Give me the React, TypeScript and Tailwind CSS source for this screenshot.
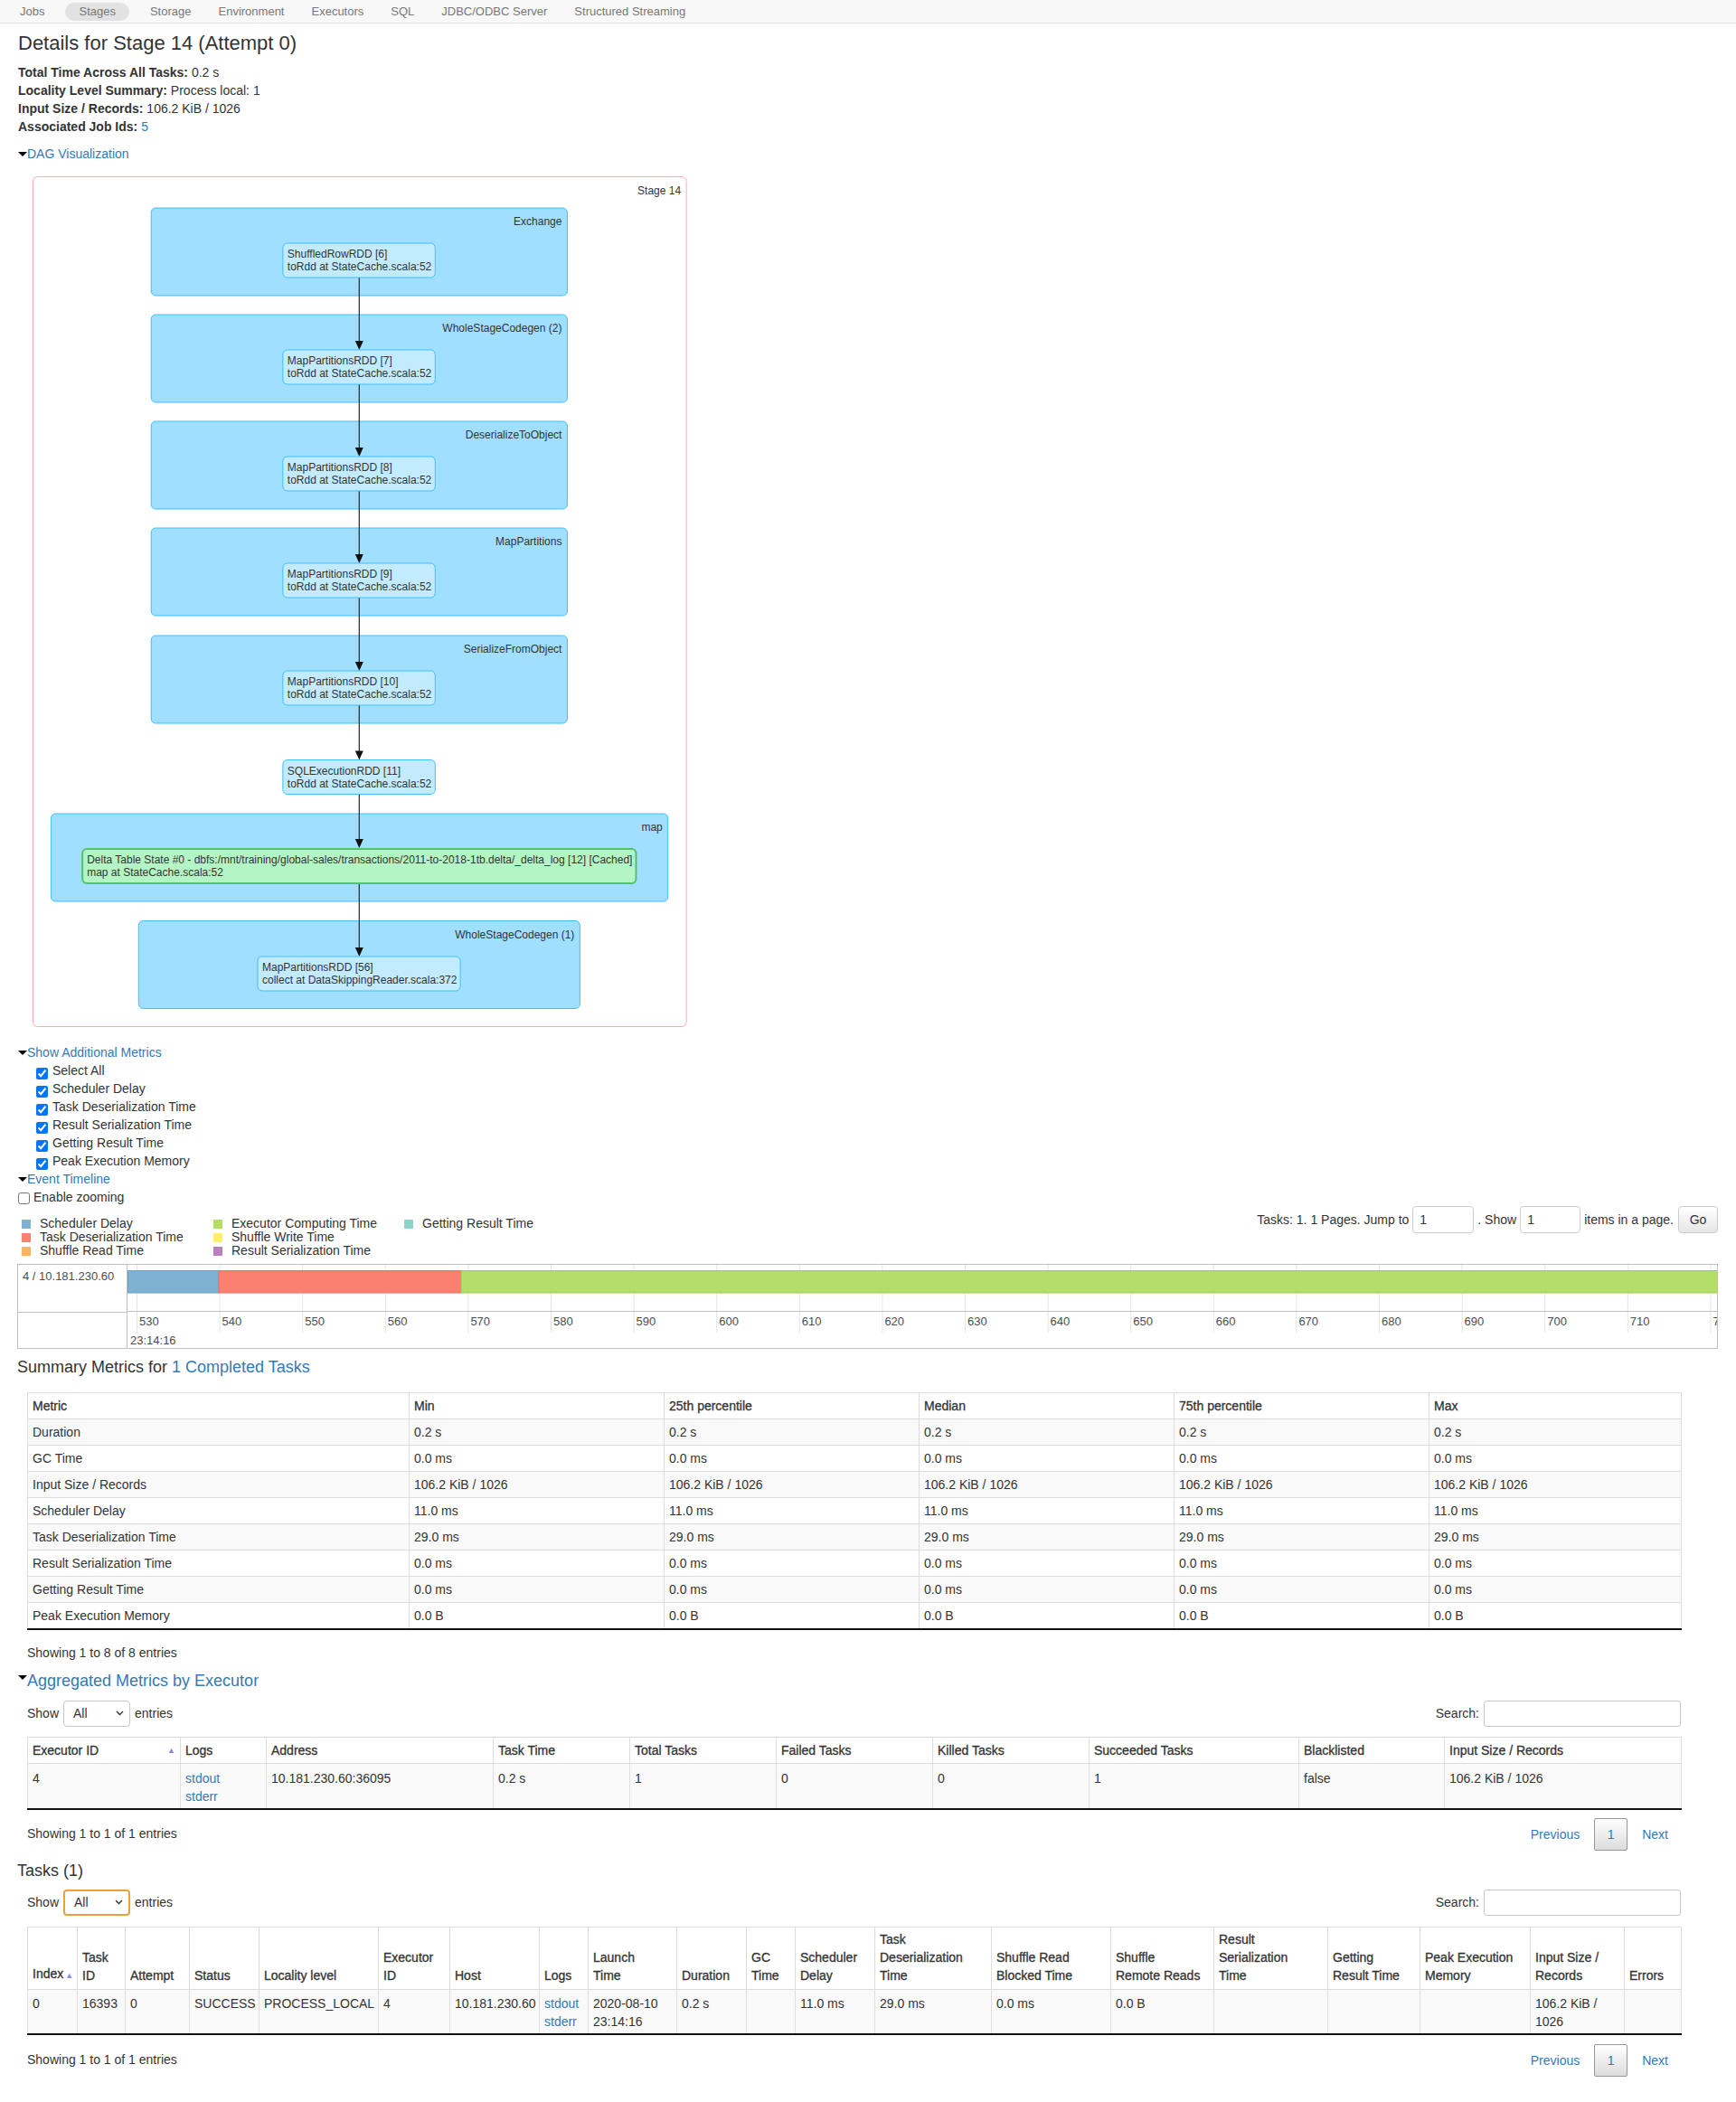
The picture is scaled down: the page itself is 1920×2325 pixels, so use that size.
import React from 'react';

const LINK = 'text-[#337ab7]';

const tabs = ['Jobs', 'Stages', 'Storage', 'Environment', 'Executors', 'SQL', 'JDBC/ODBC Server', 'Structured Streaming'];

const info = [
  ['Total Time Across All Tasks:', '0.2 s'],
  ['Locality Level Summary:', 'Process local: 1'],
  ['Input Size / Records:', '106.2 KiB / 1026'],
];

const metricBoxes = [
  'Select All',
  'Scheduler Delay',
  'Task Deserialization Time',
  'Result Serialization Time',
  'Getting Result Time',
  'Peak Execution Memory',
];

const legend: [string, string][] = [
  ['Scheduler Delay', 'bg-[#80b1d3]'],
  ['Executor Computing Time', 'bg-[#b3de69]'],
  ['Getting Result Time', 'bg-[#8dd3c7]'],
  ['Task Deserialization Time', 'bg-[#fb8072]'],
  ['Shuffle Write Time', 'bg-[#ffed6f]'],
  ['', ''],
  ['Shuffle Read Time', 'bg-[#fdb462]'],
  ['Result Serialization Time', 'bg-[#bc80bd]'],
];

const summary = [
  ['Duration', '0.2 s'],
  ['GC Time', '0.0 ms'],
  ['Input Size / Records', '106.2 KiB / 1026'],
  ['Scheduler Delay', '11.0 ms'],
  ['Task Deserialization Time', '29.0 ms'],
  ['Result Serialization Time', '0.0 ms'],
  ['Getting Result Time', '0.0 ms'],
  ['Peak Execution Memory', '0.0 B'],
];

const execCols = [
  { w: 169, h: 'Executor ID' },
  { w: 95, h: 'Logs' },
  { w: 251, h: 'Address' },
  { w: 151, h: 'Task Time' },
  { w: 162, h: 'Total Tasks' },
  { w: 173, h: 'Failed Tasks' },
  { w: 173, h: 'Killed Tasks' },
  { w: 232, h: 'Succeeded Tasks' },
  { w: 161, h: 'Blacklisted' },
  { w: 262, h: 'Input Size / Records' },
];
const execRow = ['4', 'LOGS', '10.181.230.60:36095', '0.2 s', '1', '0', '0', '1', 'false', '106.2 KiB / 1026'];

const taskCols: { w: number; h: string[] }[] = [
  { w: 55, h: ['Index'] },
  { w: 53, h: ['Task', 'ID'] },
  { w: 71, h: ['Attempt'] },
  { w: 77, h: ['Status'] },
  { w: 132, h: ['Locality level'] },
  { w: 79, h: ['Executor', 'ID'] },
  { w: 99, h: ['Host'] },
  { w: 54, h: ['Logs'] },
  { w: 98, h: ['Launch', 'Time'] },
  { w: 77, h: ['Duration'] },
  { w: 54, h: ['GC', 'Time'] },
  { w: 88, h: ['Scheduler', 'Delay'] },
  { w: 129, h: ['Task', 'Deserialization', 'Time'] },
  { w: 132, h: ['Shuffle Read', 'Blocked Time'] },
  { w: 114, h: ['Shuffle', 'Remote Reads'] },
  { w: 126, h: ['Result', 'Serialization', 'Time'] },
  { w: 102, h: ['Getting', 'Result Time'] },
  { w: 122, h: ['Peak Execution', 'Memory'] },
  { w: 104, h: ['Input Size /', 'Records'] },
  { w: 63, h: ['Errors'] },
];
const taskRow: string[][] = [
  ['0'], ['16393'], ['0'], ['SUCCESS'], ['PROCESS_LOCAL'], ['4'], ['10.181.230.60'], ['LOGS'],
  ['2020-08-10', '23:14:16'], ['0.2 s'], [], ['11.0 ms'], ['29.0 ms'], ['0.0 ms'], ['0.0 B'], [], [], [],
  ['106.2 KiB /', '1026'], [],
];

// DAG geometry, svg origin sits at page (35, 195)
const clusters = [
  { x: 133, y: 35, w: 463, label: 'Exchange' },
  { x: 133, y: 153, w: 463, label: 'WholeStageCodegen (2)' },
  { x: 133, y: 271, w: 463, label: 'DeserializeToObject' },
  { x: 133, y: 389, w: 463, label: 'MapPartitions' },
  { x: 133, y: 508, w: 463, label: 'SerializeFromObject' },
  { x: 21.5, y: 705, w: 686.5, label: 'map' },
  { x: 119, y: 823.5, w: 491, label: 'WholeStageCodegen (1)' },
];
const nodes = [
  { x: 279.5, y: 74, w: 169.5, a: 'ShuffledRowRDD [6]', b: 'toRdd at StateCache.scala:52' },
  { x: 279.5, y: 192, w: 169.5, a: 'MapPartitionsRDD [7]', b: 'toRdd at StateCache.scala:52' },
  { x: 279.5, y: 310, w: 169.5, a: 'MapPartitionsRDD [8]', b: 'toRdd at StateCache.scala:52' },
  { x: 279.5, y: 428, w: 169.5, a: 'MapPartitionsRDD [9]', b: 'toRdd at StateCache.scala:52' },
  { x: 279.5, y: 547, w: 169.5, a: 'MapPartitionsRDD [10]', b: 'toRdd at StateCache.scala:52' },
  { x: 279.5, y: 645.5, w: 169.5, a: 'SQLExecutionRDD [11]', b: 'toRdd at StateCache.scala:52' },
  {
    x: 56.5,
    y: 744,
    w: 616,
    a: 'Delta Table State #0 - dbfs:/mnt/training/global-sales/transactions/2011-to-2018-1tb.delta/_delta_log [12] [Cached]',
    b: 'map at StateCache.scala:52',
    cached: true,
  },
  { x: 251.5, y: 863, w: 225.5, a: 'MapPartitionsRDD [56]', b: 'collect at DataSkippingReader.scala:372' },
];

// horizontal squeeze so the drawing lands on the reference columns
const K = 0.994;
const X = (v: number) => 1 + (v - 1) * K;

function Arrow() {
  return <span className="inline-block w-0 h-0 border-x-[5px] border-x-transparent border-t-[5px] border-t-black" />;
}

function Dag() {
  const cx = X(364.5);
  return (
    <svg width="730" height="942" className="block ml-[16px] mt-[15px] font-['Liberation_Sans',Arial,sans-serif]">
      <rect x="1.5" y="0.5" width={727 * K} height="940" rx="5" fill="#fff" stroke="#ffa6b6" />
      <text x={X(722.5)} y="20" fontSize="12" textAnchor="end" fill="#333">
        Stage 14
      </text>
      {clusters.map(c => (
        <g key={c.label}>
          <rect x={X(c.x)} y={c.y} width={c.w * K} height="97" rx="5" fill="#a0dfff" stroke="#3ec0ff" />
          <text x={X(c.x + c.w - 6)} y={c.y + 19} fontSize="12" textAnchor="end" fill="#333">
            {c.label}
          </text>
        </g>
      ))}
      {nodes.slice(0, -1).map((n, i) => {
        const y1 = n.y + 38;
        const y2 = nodes[i + 1].y - (nodes[i + 1].cached ? 1 : 0);
        return (
          <g key={i}>
            <line x1={cx} y1={y1} x2={cx} y2={y2 - 9} stroke="#333" strokeWidth="1.3" />
            <path d={`M${cx - 4.5} ${y2 - 10} L${cx + 4.5} ${y2 - 10} L${cx} ${y2} Z`} fill="#111" />
          </g>
        );
      })}
      {nodes.map(n => (
        <g key={n.a}>
          <rect
            x={X(n.x)}
            y={n.y}
            width={n.w * K}
            height="38"
            rx="5"
            fill={n.cached ? '#b3f5c5' : '#c3ebff'}
            stroke={n.cached ? '#52c366' : '#3ec0ff'}
            strokeWidth={n.cached ? 2 : 1}
          />
          <text x={X(n.x) + 5} y={n.y + 16} fontSize="12" fill="#333">
            {n.a}
          </text>
          <text x={X(n.x) + 5} y={n.y + 30} fontSize="12" fill="#333">
            {n.b}
          </text>
        </g>
      ))}
    </svg>
  );
}

function Timeline() {
  const ticks = Array.from({ length: 20 }, (_, k) => k);
  const step = 91.6;
  return (
    <div className="flex h-[94px] border border-[#bfbfbf] overflow-hidden">
      <div className="w-[121px] shrink-0 border-r border-[#bfbfbf] flex flex-col text-[13px] text-[#4d4d4d]">
        <div className="h-[52px] pt-[3px] pl-[5px] leading-[20px] whitespace-nowrap">4 / 10.181.230.60</div>
        <div className="flex-1 border-t border-[#bfbfbf]" />
      </div>
      <svg width="1758" height="92" className="block shrink-0 font-['Liberation_Sans',Arial,sans-serif]">
        {ticks.map(k => (
          <line key={k} x1={10.5 + step * k} y1="0" x2={10.5 + step * k} y2="75" stroke="#e5e5e5" />
        ))}
        <line x1="0" y1="51.5" x2="1758" y2="51.5" stroke="#bfbfbf" />
        <rect x="0.5" y="6.5" width="100.5" height="24.5" fill="#80b1d3" stroke="#6f9fc2" />
        <rect x="101" y="6.5" width="268" height="24.5" fill="#fb8072" stroke="#e87062" />
        <rect x="369" y="6.5" width="1400" height="24.5" fill="#b3de69" stroke="#9fcb55" />
        {ticks.map(k => (
          <text key={k} x={13 + step * k} y="67" fontSize="13" fill="#4d4d4d">
            {530 + 10 * k}
          </text>
        ))}
        <text x="3" y="88" fontSize="13" fill="#4d4d4d">
          23:14:16
        </text>
      </svg>
    </div>
  );
}

function ShowRow({ focus }: { focus?: boolean }) {
  return (
    <div className="flex items-center justify-between ml-[11px] w-[1829px] h-[29px]">
      <div className="flex items-center">
        <span>Show</span>
        <div
          className={`ml-[5px] mr-[5px] w-[74px] h-[29px] rounded-[4px] flex items-center justify-between pl-[10px] pr-[6px] bg-white ${
            focus ? 'border-2 border-[#e9a23b]' : 'border border-[#c8c8c8]'
          }`}
        >
          <span>All</span>
          <svg width="9" height="6" viewBox="0 0 9 6">
            <path d="M1 1 L4.5 4.5 L8 1" fill="none" stroke="#333" strokeWidth="1.4" />
          </svg>
        </div>
        <span>entries</span>
      </div>
      <div className="flex items-center gap-[5px]">
        <span>Search:</span>
        <div className="w-[218px] h-[29px] border border-[#c8c8c8] rounded-[3px] bg-white" />
      </div>
    </div>
  );
}

function Paging() {
  return (
    <div className="flex items-start justify-between ml-[11px] w-[1829px]">
      <div className="pt-[7px] leading-[20px]">Showing 1 to 1 of 1 entries</div>
      <div className="flex items-center h-[36px]">
        <span className={`px-[14px] ${LINK}`}>Previous</span>
        <span className={`ml-[2px] w-[37px] h-[36px] flex items-center justify-center border border-[#979797] rounded-[2px] bg-gradient-to-b from-white to-[#dcdcdc] ${LINK}`}>
          1
        </span>
        <span className={`ml-[2px] px-[14px] ${LINK}`}>Next</span>
      </div>
    </div>
  );
}

const TH = 'border border-[#dddddd] px-[5px] text-left font-normal [-webkit-text-stroke:0.3px_#333]';
const TD = 'border border-[#dddddd] px-[5px] align-middle';

function Logs() {
  return (
    <div className={`flex flex-col ${LINK}`}>
      <span>stdout</span>
      <span>stderr</span>
    </div>
  );
}

export default function App() {
  return (
    <div className="w-[1920px] h-[2325px] overflow-hidden bg-white text-[#333] text-[14px] leading-[20px] font-['Liberation_Sans',Arial,sans-serif]">
      <nav className="h-[26px] bg-[#f8f8f8] border-b border-[#e5e5e5]">
        <ul className="flex items-center h-[25px] pl-[7px] text-[13px] text-[#777]">
          {tabs.map(t => (
            <li
              key={t}
              className={`px-[15px] h-[20px] leading-[20px] rounded-full ${t === 'Stages' ? 'bg-[#e2e2e2] mx-[8px]' : ''}`}
            >
              {t}
            </li>
          ))}
        </ul>
      </nav>

      <main className="pl-[19px] pr-[20px]">
        <h3 className="mt-[10px] h-[24px] leading-[24px] text-[22px] pl-[1px]">Details for Stage 14 (Attempt 0)</h3>

        <ul className="mt-[10px] pl-[1px]">
          {info.map(([k, v]) => (
            <li key={k}>
              <strong>{k}</strong> {v}
            </li>
          ))}
          <li>
            <strong>Associated Job Ids:</strong> <span className={LINK}>5</span>
          </li>
        </ul>

        <div className="mt-[10px] flex items-center pl-[1px]">
          <Arrow />
          <span className={LINK}>DAG Visualization</span>
        </div>

        <Dag />

        <div className="mt-[17px] flex items-center pl-[1px]">
          <Arrow />
          <span className={LINK}>Show Additional Metrics</span>
        </div>
        <ul>
          {metricBoxes.map(m => (
            <li key={m} className="flex items-start h-[20px] pl-[21px]">
              <input type="checkbox" defaultChecked className="m-0 mt-[7px] w-[13px] h-[13px]" />
              <span className="ml-[5px]">{m}</span>
            </li>
          ))}
        </ul>
        <div className="flex items-center pl-[1px]">
          <Arrow />
          <span className={LINK}>Event Timeline</span>
        </div>
        <div className="flex items-start h-[20px] pl-[1px]">
          <input type="checkbox" className="m-0 mt-[5px] w-[13px] h-[13px]" />
          <span className="ml-[4px]">Enable zooming</span>
        </div>

        <div className="flex justify-between items-start h-[64px]">
          <div className="pt-[12px] pl-[5px] grid grid-cols-[212px_211px_220px] leading-[15px]">
            {legend.map(([label, color], i) => (
              <div key={i} className="flex items-center gap-[10px] h-[15px]">
                {label && <span className={`w-[10px] h-[10px] ${color}`} />}
                {label && <span>{label}</span>}
              </div>
            ))}
          </div>
          <div className="flex items-center gap-[4px] h-[30px]">
            <span>Tasks: 1. 1 Pages. Jump to</span>
            <div className="w-[68px] h-[30px] border border-[#ccc] rounded-[4px] pl-[7px] leading-[28px]">1</div>
            <span>. Show</span>
            <div className="w-[67px] h-[30px] border border-[#ccc] rounded-[4px] pl-[7px] leading-[28px]">1</div>
            <span>items in a page.</span>
            <div className="ml-[1px] w-[44px] h-[30px] border border-[#ccc] rounded-[4px] bg-gradient-to-b from-white to-[#e6e6e6] flex items-center justify-center">
              Go
            </div>
          </div>
        </div>

        <Timeline />

        <h4 className="mt-[8px] text-[18px] leading-[24px]">
          Summary Metrics for <span className={LINK}>1 Completed Tasks</span>
        </h4>

        <table className="mt-[16px] ml-[11px] w-[1829px] table-fixed border-collapse">
          <colgroup>
            {[422, 282, 282, 282, 282, 279].map((w, i) => (
              <col key={i} style={{ width: w }} />
            ))}
          </colgroup>
          <thead>
            <tr className="h-[29px]">
              {['Metric', 'Min', '25th percentile', 'Median', '75th percentile', 'Max'].map(h => (
                <th key={h} className={TH}>
                  {h}
                </th>
              ))}
            </tr>
          </thead>
          <tbody className="border-b-2 border-b-[#111]">
            {summary.map(([k, v], i) => (
              <tr key={k} className={`h-[29px] ${i % 2 === 0 ? 'bg-[#f9f9f9]' : 'bg-white'}`}>
                <td className={TD}>{k}</td>
                {[0, 1, 2, 3, 4].map(j => (
                  <td key={j} className={TD}>
                    {v}
                  </td>
                ))}
              </tr>
            ))}
          </tbody>
        </table>
        <div className="mt-[15px] ml-[11px]">Showing 1 to 8 of 8 entries</div>

        <div className="mt-[9px] flex items-start pl-[1px]">
          <span className="-mt-[4px]">
            <Arrow />
          </span>
          <h4 className={`text-[18px] leading-[24px] ${LINK}`}>Aggregated Metrics by Executor</h4>
        </div>
        <div className="mt-[10px]">
          <ShowRow />
        </div>

        <table className="mt-[11px] ml-[11px] w-[1829px] table-fixed border-collapse">
          <colgroup>
            {execCols.map((c, i) => (
              <col key={i} style={{ width: c.w }} />
            ))}
          </colgroup>
          <thead>
            <tr className="h-[29px]">
              {execCols.map(c => (
                <th key={c.h} className={TH}>
                  {c.h === 'Executor ID' ? (
                    <div className="flex items-center justify-between">
                      <span>{c.h}</span>
                      <span className="text-[9px] text-[#8a8adb] [-webkit-text-stroke:0px]">▲</span>
                    </div>
                  ) : (
                    c.h
                  )}
                </th>
              ))}
            </tr>
          </thead>
          <tbody className="border-b-2 border-b-[#111]">
            <tr className="bg-[#f9f9f9]">
              {execRow.map((v, i) => (
                <td key={i} className="border border-[#dddddd] px-[5px] pt-[6px] pb-[3px] align-top">
                  {v === 'LOGS' ? <Logs /> : v}
                </td>
              ))}
            </tr>
          </tbody>
        </table>
        <div className="mt-[9px]">
          <Paging />
        </div>

        <h4 className="mt-[10px] text-[18px] leading-[24px]">Tasks (1)</h4>
        <div className="mt-[9px]">
          <ShowRow focus />
        </div>

        <table className="mt-[12px] ml-[11px] w-[1829px] table-fixed border-collapse">
          <colgroup>
            {taskCols.map((c, i) => (
              <col key={i} style={{ width: c.w }} />
            ))}
          </colgroup>
          <thead>
            <tr className="h-[69px]">
              {taskCols.map((c, i) => (
                <th key={i} className={`${TH} align-bottom pb-[5px] whitespace-nowrap`}>
                  {c.h.map((line, j) => (
                    <div key={j}>
                      {line}
                      {line === 'Index' && (
                        <span className="ml-[2px] text-[9px] text-[#8a8adb] [-webkit-text-stroke:0px]">▲</span>
                      )}
                    </div>
                  ))}
                </th>
              ))}
            </tr>
          </thead>
          <tbody className="border-b-2 border-b-[#111]">
            <tr className="bg-[#f9f9f9]">
              {taskRow.map((v, i) => (
                <td key={i} className="border border-[#dddddd] pl-[5px] pr-[2px] pt-[5px] pb-[3px] align-top whitespace-nowrap">
                  {v[0] === 'LOGS' ? <Logs /> : v.map((l, j) => <div key={j}>{l}</div>)}
                  {v.length === 0 && <div>&nbsp;</div>}
                </td>
              ))}
            </tr>
          </tbody>
        </table>
        <div className="mt-[10px]">
          <Paging />
        </div>
      </main>
    </div>
  );
}
